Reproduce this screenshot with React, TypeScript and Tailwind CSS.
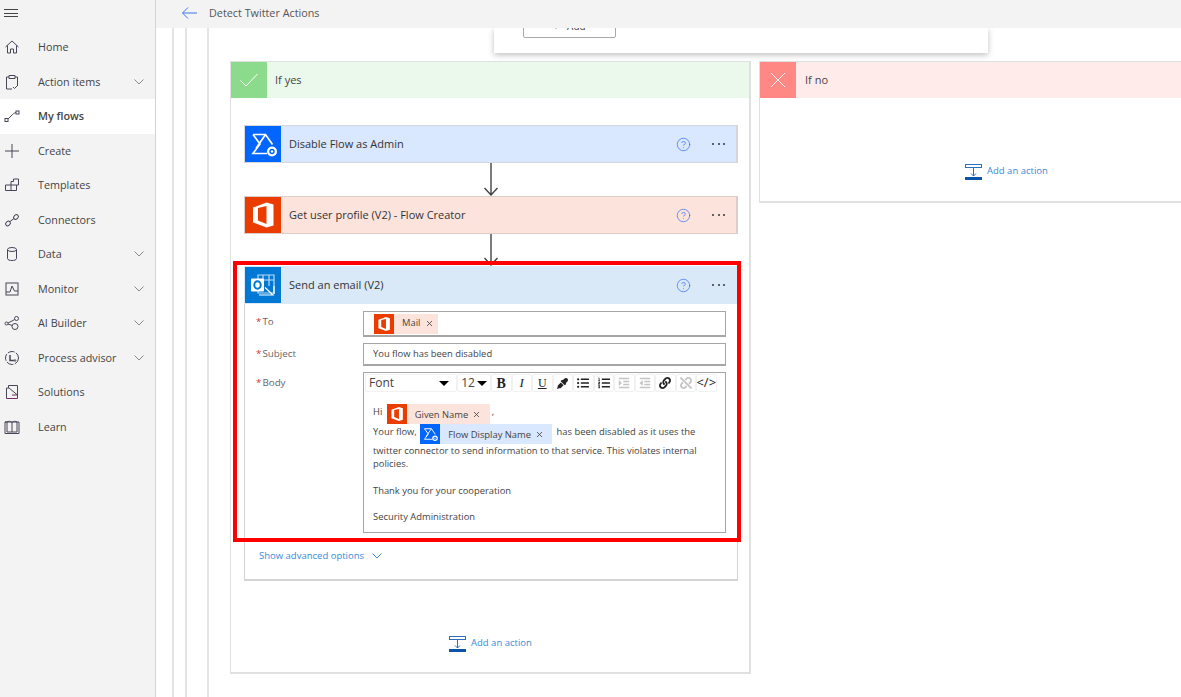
import { ReactNode } from "react";
import { CircleHelp, X } from "lucide-react";
import { FaEyeDropper, FaIndent, FaLink, FaListOl, FaListUl, FaOutdent, FaUnlink } from "react-icons/fa";

const navIcons: Record<string, ReactNode> = {
  Home: <path d="M1.500 8 8 2l6.500 6M3.500 6.500V14H6.500V10H9.500V14H12.500V6.500" />,
  "Action items": (
    <>
      <path d="M5 3H2.500V15H8M11 3H13.500V11M5 1.500H11V4.500H5Z" />
      <path d="M9 13l1.500 1.500L14 11" />
    </>
  ),
  "My flows": (
    <>
      <rect x="1" y="10.500" width="3" height="3" />
      <rect x="12" y="3" width="3" height="3" />
      <path d="M4 11 8 7c1-1 2-2 4-2.500" />
    </>
  ),
  Create: <path d="M8 1V15M1 8H15" />,
  Templates: <path d="M7 4.500H9.500V2H14.500V8H12.500V13.500H1.500V8H7ZM7 8H12.500M7 8V13.500" />,
  Connectors: (
    <>
      <rect x="1.500" y="9.500" width="5" height="4" rx="2" transform="rotate(-40 4 11.500)" />
      <rect x="9.500" y="3" width="5" height="4" rx="2" transform="rotate(-40 12 5)" />
      <path d="M6 9.500 10 6.500" />
    </>
  ),
  Data: (
    <>
      <ellipse cx="8" cy="3.500" rx="4.500" ry="2" />
      <path d="M3.500 3.500V12.500C3.500 14 6 14.500 8 14.500S12.500 14 12.500 12.500V3.500" />
    </>
  ),
  Monitor: (
    <>
      <rect x="2" y="2" width="12" height="12" />
      <path d="M2 11H6L8 5l2.500 5H14" />
    </>
  ),
  "AI Builder": (
    <>
      <circle cx="2.500" cy="8.500" r="1.500" />
      <circle cx="12.500" cy="3.500" r="2" />
      <circle cx="11" cy="11.500" r="3" />
      <path d="M4 8 10.800 4.500M4 9 8.200 10.500" />
    </>
  ),
  "Process advisor": (
    <>
      <circle cx="8" cy="8" r="6.500" strokeDasharray="7 1.500" />
      <path d="M6 5V10.500H10" strokeWidth="1.500" />
      <circle cx="11" cy="10.500" r="0.800" />
    </>
  ),
  Solutions: (
    <>
      <path d="M2.500 14.500V4H5L13.500 11V1.500H4.500V4" />
      <path d="M2.500 14.500H13.500V11H8" stroke="#7a2a6a" />
    </>
  ),
  Learn: <path d="M1 3H3V13H8V3.500C6.500 2 4.500 2 3 3M8 3.500C9.500 2 11.500 2 13 3V13H8M13 3H15V14.500H1V3Z" />,
};

const navItems = [
  { label: "Home" },
  { label: "Action items", chevron: true },
  { label: "My flows", active: true },
  { label: "Create" },
  { label: "Templates" },
  { label: "Connectors" },
  { label: "Data", chevron: true },
  { label: "Monitor", chevron: true },
  { label: "AI Builder", chevron: true },
  { label: "Process advisor", chevron: true },
  { label: "Solutions" },
  { label: "Learn" },
];

function Chevron({ color = "#8a8a8a" }: { color?: string }) {
  return (
    <svg viewBox="0 0 10 6" className="h-[6px] w-[10px]" fill="none" stroke={color} strokeWidth="1">
      <path d="M0.500 0.500 5 5 9.500 0.500" />
    </svg>
  );
}

function OfficeLogo({ size }: { size: number }) {
  return (
    <svg viewBox="0 0 36 36" width={size} height={size} className="shrink-0 bg-[#eb3c00]">
      <path
        fill="#fff"
        fillRule="evenodd"
        d="M8 10.500 21.500 5.500 28.500 7.500V28.500L21.500 30.500 8 25.500ZM21.500 9 13 11V23.500L21.500 27Z"
      />
    </svg>
  );
}

function FlowLogo({ size }: { size: number }) {
  return (
    <svg viewBox="0 0 36 36" width={size} height={size} className="shrink-0 bg-[#0066ff]">
      <path
        fill="none"
        stroke="#fff"
        strokeWidth="1.700"
        d="M8 8.500H20.500L27.500 18.500M8 8.500 15 18 8 27.500H22M20.500 8.500 11 22.500"
      />
      <circle cx="27" cy="25.500" r="5" fill="#fff" />
      <circle cx="27" cy="25.500" r="2.700" fill="#0066ff" />
      <circle cx="27" cy="25.500" r="1.200" fill="#fff" />
    </svg>
  );
}

function OutlookLogo() {
  return (
    <svg viewBox="0 0 36 36" width={36} height={36} className="shrink-0 bg-[#0078d4]">
      <path fill="none" stroke="#bcdcf5" strokeWidth="1.200" d="M13 8H29V26H13ZM18 8V19M24 8V19M13 13H29" />
      <path fill="none" stroke="#fff" strokeWidth="1.200" d="M14 28H28L20 20.500M29 19V27" />
      <rect x="6" y="11.500" width="13" height="13" rx="1" fill="#fff" />
      <ellipse cx="12.500" cy="18" rx="3.200" ry="3.800" fill="none" stroke="#0078d4" strokeWidth="2" />
    </svg>
  );
}

function DownArrow({ height }: { height: number }) {
  return (
    <div className="flex justify-center">
      <svg width="16" height={height} viewBox={`0 0 16 ${height}`} fill="none" stroke="#444" strokeWidth="1.400">
        <path d={`M8 0V${height - 1}M1.500 ${height - 8} 8 ${height - 1} 14.500 ${height - 8}`} />
      </svg>
    </div>
  );
}

function CardHeader({
  icon,
  title,
  bg,
  border,
  className = "",
}: {
  icon: ReactNode;
  title: string;
  bg: string;
  border: string;
  className?: string;
}) {
  return (
    <div className={`flex h-[38px] items-center border-y border-r-2 border-l ${bg} ${border} ${className}`}>
      {icon}
      <span className="ml-2 flex-1 text-[11px] text-[#333]">{title}</span>
      <CircleHelp size={15} strokeWidth={1.200} className="mr-[21px] text-[#3f74f0]" />
      <div className="mr-[11px] flex gap-[3.500px]">
        <span className="h-[2px] w-[2px] rounded-full bg-[#333]" />
        <span className="h-[2px] w-[2px] rounded-full bg-[#333]" />
        <span className="h-[2px] w-[2px] rounded-full bg-[#333]" />
      </div>
    </div>
  );
}

function Token({
  icon,
  label,
  className,
  closeGap,
}: {
  icon: ReactNode;
  label: string;
  className: string;
  closeGap: string;
}) {
  return (
    <span className={`inline-flex h-5 items-center align-[-9.500px] text-[9.400px] text-[#444] ${className}`}>
      {icon}
      <span className="ml-2 flex-1 whitespace-nowrap">{label}</span>
      <X size={9} strokeWidth={2} className={`text-[#333] ${closeGap}`} />
    </span>
  );
}

function FieldLabel({ label }: { label: string }) {
  return (
    <div className="w-[107px] shrink-0 pt-1 text-[9.800px] text-[#666]">
      <span className="mr-px text-[#d13438]">*</span>
      {label}
    </div>
  );
}

function ToolButton({ children, width = "w-[20.500px]" }: { children: ReactNode; width?: string }) {
  return (
    <div className={`flex h-[18px] shrink-0 items-center justify-center rounded-[2px] border border-[#f1f1f1] bg-white text-[#222] ${width}`}>
      {children}
    </div>
  );
}

function AddAction({ className = "" }: { className?: string }) {
  return (
    <div className={`flex items-center gap-[5px] ${className}`}>
      <svg viewBox="0 0 17 17" width="17" height="17" fill="none">
        <rect x="0.500" y="1.500" width="16" height="3" stroke="#2a6fc0" />
        <path d="M8.500 4.500V13M6 10.500l2.500 2.500 2.500-2.500" stroke="#2a6fc0" />
        <rect x="0" y="14" width="17" height="3" fill="#0a55a8" />
      </svg>
      <span className="text-[9.500px] text-[#3a8ad8]">Add an action</span>
    </div>
  );
}

export default function App() {
  return (
    <div className="relative flex h-[697px] w-[1181px] overflow-hidden bg-white font-['Open_Sans',sans-serif]">
      {/* Left nav */}
      <aside className="w-[156px] shrink-0 border-r border-[#d4d4d4] bg-[#f3f3f3]">
        <div className="flex h-[30px] items-start pt-[9px] pl-[4px]">
          <div className="flex h-[8px] w-[14px] flex-col justify-between">
            <div className="h-px bg-[#444]" />
            <div className="h-px bg-[#444]" />
            <div className="h-px bg-[#444]" />
          </div>
        </div>
        {navItems.map((item) => (
          <div
            key={item.label}
            className={`flex h-[34.500px] items-center pl-[4px] text-[10.800px] text-[#444] ${
              item.active ? "bg-white font-semibold" : ""
            }`}
          >
            <svg viewBox="0 0 16 16" className="h-4 w-4" fill="none" stroke="#4a4458" strokeWidth="1">
              {navIcons[item.label]}
            </svg>
            <span className="ml-[18px] flex-1">{item.label}</span>
            {item.chevron && (
              <span className="mr-[11px]">
                <Chevron />
              </span>
            )}
          </div>
        ))}
      </aside>

      <main className="flex min-w-0 flex-1 flex-col">
        <header className="flex h-[28px] shrink-0 items-center bg-[#f3f3f3] pb-[2px] pl-[26px] text-[10.800px] text-[#555]">
          <svg width="15" height="12" viewBox="0 0 15 12" fill="none" stroke="#3f74f0" strokeWidth="1">
            <path d="M0.500 6H15M6 0.500 0.500 6 6 11.500" />
          </svg>
          <span className="ml-[12px]">Detect Twitter Actions</span>
        </header>

        <div className="min-h-0 flex-1 overflow-hidden">
          <div className="ml-4 h-full border-l-2 border-[#e4e4e4]">
            <div className="ml-[11px] h-full border-l-2 border-[#e4e4e4]">
              <div className="ml-5 h-full border-l-2 border-[#e4e4e4] pl-[21px]">
                {/* Condition card above, scrolled mostly out of view */}
                <div className="ml-[264px] h-[25px] w-[494px] overflow-hidden bg-white shadow-[0_2px_6px_rgba(0,0,0,0.25)]">
                  <div className="-mt-[14px] ml-[29px] flex h-6 w-[93px] items-center justify-center gap-2 rounded-[2px] border border-[#a8a8a8] text-[10px] text-[#444]">
                    <span className="text-[#c85a00]">+</span> Add
                  </div>
                </div>

                <div className="mt-2 flex w-[1100px] gap-2">
                  {/* If yes */}
                  <section className="h-[613px] w-[521px] shrink-0 border-t border-r-2 border-b-2 border-l border-[#e0e0e0]">
                    <div className="flex h-[36px] items-center bg-[#ebf9ec]">
                      <div className="flex h-[36px] w-[36px] items-center justify-center bg-[#8cdb8c]">
                        <svg viewBox="0 0 20 20" width="20" height="20" fill="none" stroke="#fff" strokeWidth="1">
                          <path d="M1.500 10.500 7 16 18.500 4" />
                        </svg>
                      </div>
                      <span className="ml-2 text-[11px] text-[#444]">If yes</span>
                    </div>

                    <div className="pt-[27px] pl-[13px]">
                      <div className="w-[494px]">
                        <CardHeader
                          icon={<FlowLogo size={36} />}
                          title="Disable Flow as Admin"
                          bg="bg-[#d9e7ff]"
                          border="border-[#d4d7de]"
                        />
                        <DownArrow height={33} />
                        <CardHeader
                          icon={<OfficeLogo size={36} />}
                          title="Get user profile (V2) - Flow Creator"
                          bg="bg-[#fce4dc]"
                          border="border-[#dccdc8]"
                        />
                        <DownArrow height={32} />

                        {/* Send an email */}
                        <div className="h-[315px] border-r border-b-2 border-l border-[#d4d4d4]">
                          <CardHeader
                            icon={<OutlookLogo />}
                            title="Send an email (V2)"
                            bg="bg-[#d9e9f8]"
                            border="border-[#d9e9f8]"
                            className="-mx-px"
                          />
                          <div className="pt-[7px] pr-[11px] pl-[11px]">
                            <div className="flex">
                              <FieldLabel label="To" />
                              <div className="flex h-[26px] flex-1 items-center border border-b-2 border-[#a6a6a6] pl-[10px]">
                                <Token
                                  icon={<OfficeLogo size={20} />}
                                  label="Mail"
                                  className="w-[64px] bg-[#fce4dc]"
                                  closeGap="mr-1"
                                />
                              </div>
                            </div>
                            <div className="mt-[6px] flex">
                              <FieldLabel label="Subject" />
                              <div className="flex h-[23px] flex-1 items-center border border-b-2 border-[#a6a6a6] pl-[9px] text-[9.400px] text-[#444]">
                                You flow has been disabled
                              </div>
                            </div>
                            <div className="mt-[6px] flex">
                              <FieldLabel label="Body" />
                              <div className="h-[161px] flex-1 border border-[#a6a6a6]">
                                <div className="flex items-center pt-[1px] pl-[1px]">
                                  <ToolButton width="w-[92px]">
                                    <div className="flex w-full items-center justify-between pr-[7px] pl-[3px] text-[12px] text-[#444]">
                                      Font <span className="h-0 w-0 border-x-[5px] border-t-[5px] border-x-transparent border-t-black" />
                                    </div>
                                  </ToolButton>
                                  <ToolButton width="w-[34px]">
                                    <div className="flex items-center gap-[2px] text-[12px] text-[#444]">
                                      12 <span className="h-0 w-0 border-x-[5px] border-t-[5px] border-x-transparent border-t-black" />
                                    </div>
                                  </ToolButton>
                                  <ToolButton>
                                    <span className="font-['Liberation_Serif',serif] text-[14px] font-bold">B</span>
                                  </ToolButton>
                                  <ToolButton>
                                    <span className="font-['Liberation_Serif',serif] text-[13px] italic">I</span>
                                  </ToolButton>
                                  <ToolButton>
                                    <span className="font-['Liberation_Serif',serif] text-[12px] underline">U</span>
                                  </ToolButton>
                                  <ToolButton>
                                    <FaEyeDropper size={11} />
                                  </ToolButton>
                                  <ToolButton>
                                    <FaListUl size={12} />
                                  </ToolButton>
                                  <ToolButton>
                                    <FaListOl size={12} />
                                  </ToolButton>
                                  <ToolButton>
                                    <FaIndent size={12} className="text-[#c4c4c4]" />
                                  </ToolButton>
                                  <ToolButton>
                                    <FaOutdent size={12} className="text-[#c4c4c4]" />
                                  </ToolButton>
                                  <ToolButton>
                                    <FaLink size={12} />
                                  </ToolButton>
                                  <ToolButton>
                                    <FaUnlink size={12} className="text-[#c4c4c4]" />
                                  </ToolButton>
                                  <ToolButton>
                                    <span className="text-[13px]">&lt;/&gt;</span>
                                  </ToolButton>
                                </div>
                                <div className="pt-[12px] pr-[9px] pl-[9px] text-[9.400px] leading-[13px] text-[#444]">
                                  <div>
                                    Hi{" "}
                                    <Token
                                      icon={<OfficeLogo size={20} />}
                                      label="Given Name"
                                      className="ml-[2px] w-[103px] bg-[#fce4dc]"
                                      closeGap="mr-[9px]"
                                    />
                                    <span className="ml-[2px]">,</span>
                                  </div>
                                  <div>
                                    Your flow,{" "}
                                    <Token
                                      icon={<FlowLogo size={20} />}
                                      label="Flow Display Name"
                                      className="ml-[1px] w-[132px] bg-[#d9e7ff]"
                                      closeGap="mr-2"
                                    />
                                    <span className="ml-[2px]"> has been disabled as it uses the twitter connector to send information to that service. This violates internal policies.</span>
                                  </div>
                                  <div className="mt-[14px]">Thank you for your cooperation</div>
                                  <div className="mt-[13px]">Security Administration</div>
                                </div>
                              </div>
                            </div>
                            <div className="mt-[16px] flex items-center gap-2 pl-[3px] text-[9.500px] text-[#3a8ad8]">
                              Show advanced options <Chevron color="#3a8ad8" />
                            </div>
                          </div>
                        </div>
                      </div>
                      <AddAction className="mt-[54px] ml-[205px]" />
                    </div>
                  </section>

                  {/* If no */}
                  <section className="h-[142px] w-[521px] shrink-0 border-t border-r-2 border-b-2 border-l border-[#e0e0e0]">
                    <div className="flex h-[36px] items-center bg-[#ffebe9]">
                      <div className="flex h-[36px] w-[36px] items-center justify-center bg-[#ff8884]">
                        <svg viewBox="0 0 16 16" width="16" height="16" fill="none" stroke="#fff" strokeWidth="1">
                          <path d="M1 1 15 15M15 1 1 15" />
                        </svg>
                      </div>
                      <span className="ml-[9px] text-[11px] text-[#444]">If no</span>
                    </div>
                    <AddAction className="mt-[65px] ml-[205px]" />
                  </section>
                </div>
              </div>
            </div>
          </div>
        </div>
      </main>

      {/* Red annotation around the highlighted action */}
      <div className="absolute top-[261px] left-[233px] h-[281px] w-[508px] border-4 border-[#ff0000]" />
    </div>
  );
}
